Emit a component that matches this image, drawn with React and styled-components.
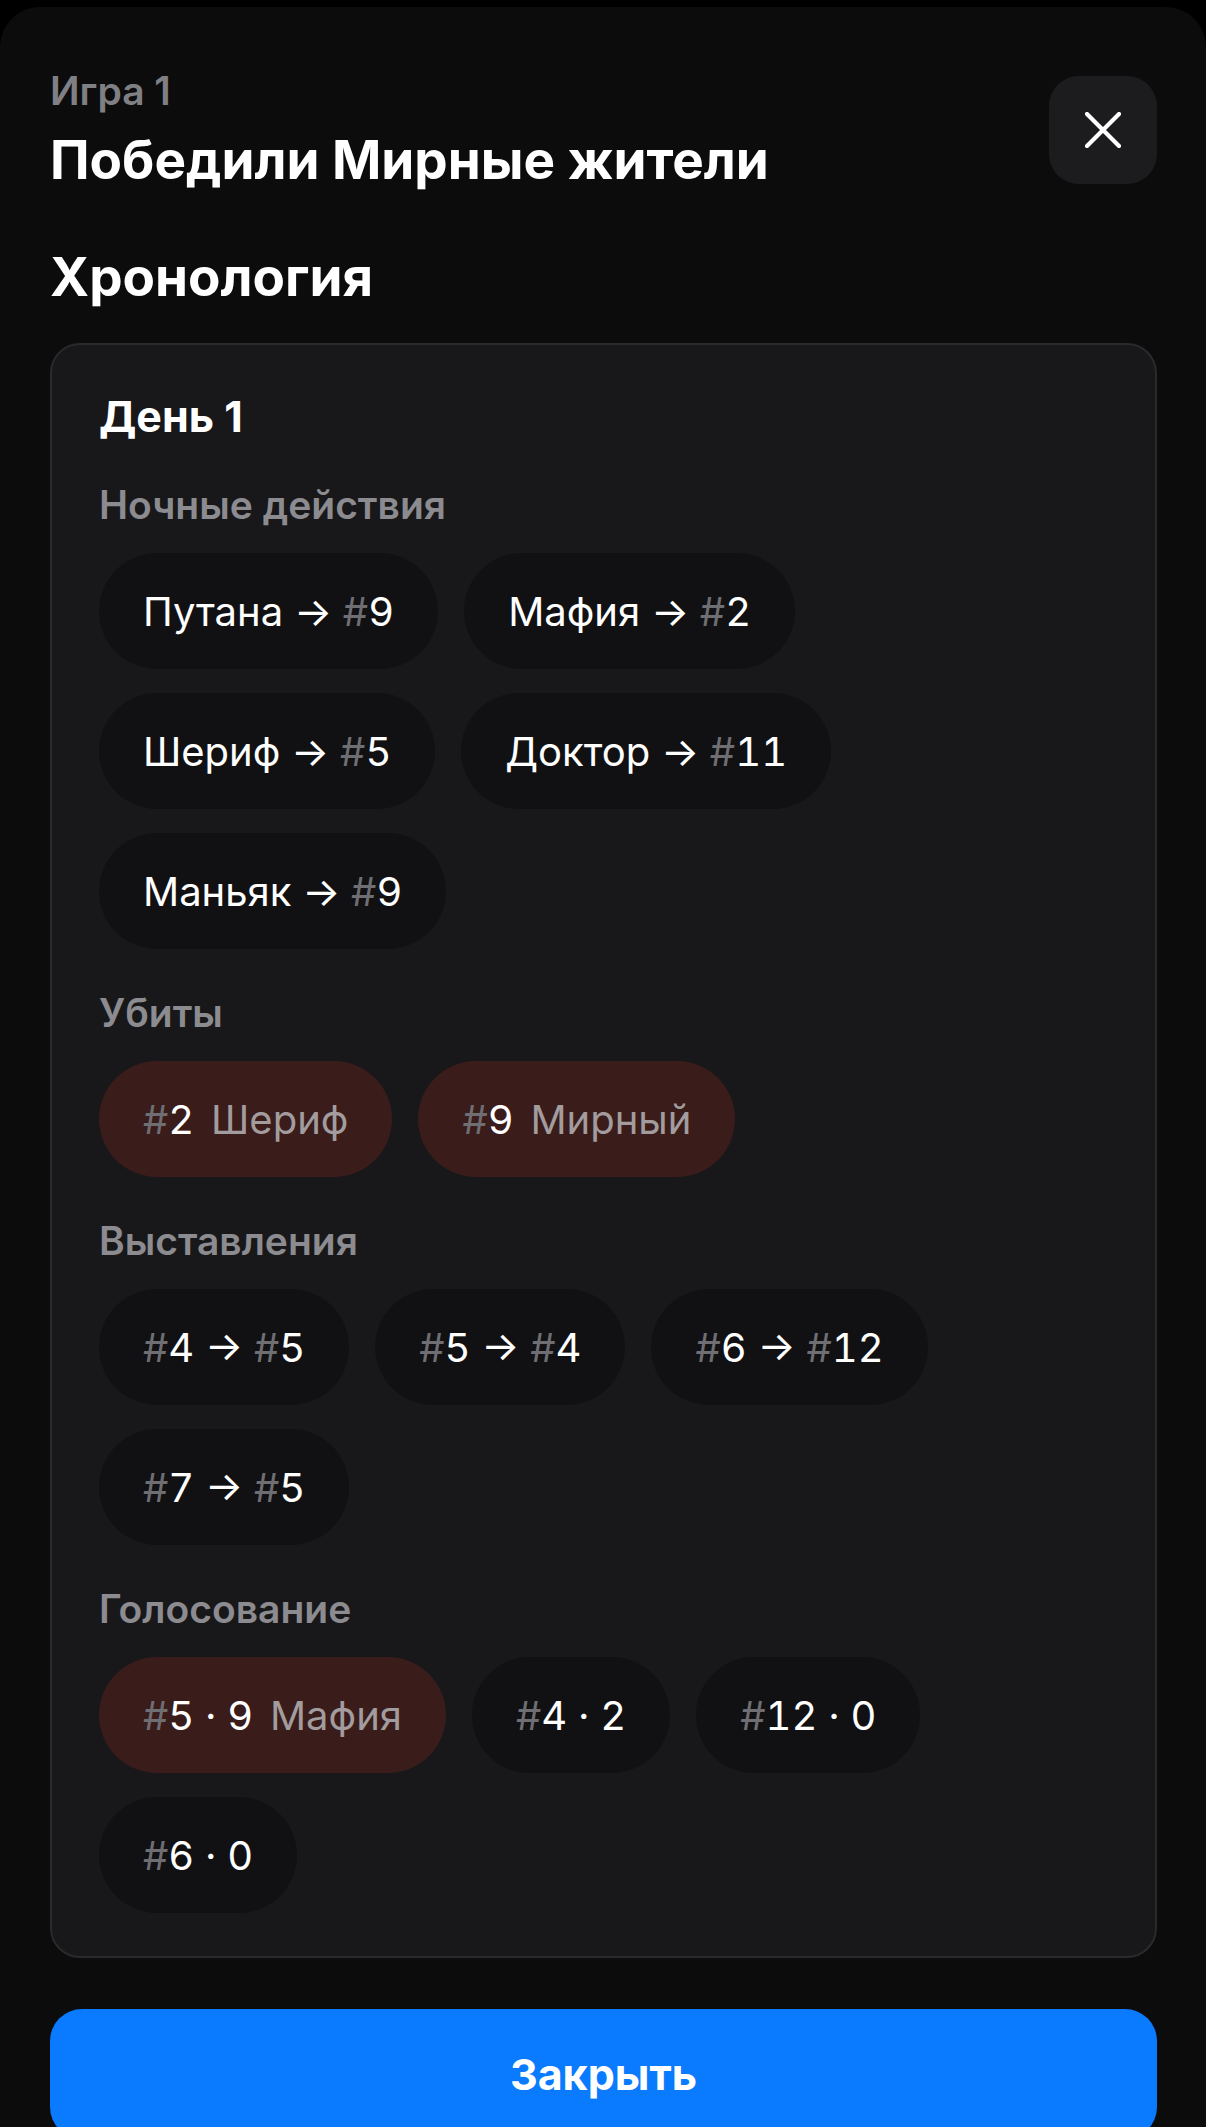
import React from 'react';
import styled, { createGlobalStyle } from 'styled-components';

const GlobalStyle = createGlobalStyle`
  html, body {
    margin: 0;
    padding: 0;
    background: #000;
    overflow: hidden;
  }
  body {
    font-family: Inter, "Noto Sans", sans-serif;
    -webkit-font-smoothing: antialiased;
  }
  * { box-sizing: border-box; }
`;

const Screen = styled.div`
  min-height: 2127px;
  background: #000;
  padding-top: 7px;
`;

const Sheet = styled.div`
  min-height: 2120px;
  background: #0c0c0d;
  border-radius: 40px 40px 0 0;
  padding: 62px 49px 0 50px;
  display: flex;
  flex-direction: column;
`;

const Header = styled.header`
  display: flex;
  justify-content: space-between;
  align-items: flex-start;
`;

const TitleBlock = styled.div`
  display: flex;
  flex-direction: column;
  gap: 18px;
`;

const Eyebrow = styled.div`
  font-size: 39px;
  line-height: 44px;
  font-weight: 600;
  color: #7f7f84;
`;

const Title = styled.h1`
  margin: 0;
  font-size: 53px;
  line-height: 58px;
  font-weight: 700;
  color: #fff;
`;

const CloseButton = styled.button`
  margin-top: 7px;
  width: 108px;
  height: 108px;
  border: none;
  padding: 0;
  border-radius: 30px;
  background: #1c1c1e;
  display: flex;
  align-items: center;
  justify-content: center;
  cursor: pointer;
`;

const SectionTitle = styled.h2`
  margin: 58px 0 0;
  font-size: 53px;
  line-height: 60px;
  font-weight: 700;
  color: #fff;
`;

const Card = styled.section`
  margin-top: 36px;
  background: #18181a;
  border: 2px solid #2a2a2d;
  border-radius: 30px;
  padding: 46px 47px 43px;
  display: flex;
  flex-direction: column;
  gap: 41px;
`;

const DayTitle = styled.h3`
  margin: 0;
  font-size: 43px;
  line-height: 50px;
  font-weight: 700;
  color: #fff;
`;

const Group = styled.div`
  display: flex;
  flex-direction: column;
  gap: 25px;
`;

const GroupLabel = styled.div`
  font-size: 39px;
  line-height: 46px;
  font-weight: 600;
  color: #8b8b90;
`;

const ChipRow = styled.div`
  display: flex;
  flex-wrap: wrap;
  gap: 24px 26px;
`;

const Chip = styled.div`
  height: 116px;
  padding: 0 44px;
  border-radius: 58px;
  background: ${(p) => (p.$danger ? '#3a1c1b' : '#111113')};
  display: flex;
  align-items: center;
  font-size: 40px;
  font-weight: 400;
  font-variant-numeric: tabular-nums;
  color: #fff;
`;

const ChipText = styled.span`
  white-space: nowrap;
`;

const Hash = styled.span`
  color: #6e6e73;
`;

const Muted = styled.span`
  margin-left: 6px;
  color: #a29c9e;
`;

const PrimaryButton = styled.button`
  margin-top: 51px;
  width: 100%;
  height: 130px;
  border: none;
  border-radius: 32px;
  background: #0a7aff;
  color: #fff;
  font-family: inherit;
  font-size: 43px;
  font-weight: 700;
  cursor: pointer;
`;

const CloseIcon = () => (
  <svg width="36" height="36" viewBox="0 0 36 36" fill="none">
    <path
      d="M2 2L34 34M34 2L2 34"
      stroke="#fff"
      strokeWidth="4.2"
      strokeLinecap="round"
    />
  </svg>
);

const Num = ({ n }) => (
  <>
    <Hash>#</Hash>
    {n}
  </>
);

const night = [
  ['Путана', 9],
  ['Мафия', 2],
  ['Шериф', 5],
  ['Доктор', 11],
  ['Маньяк', 9],
];

const killed = [
  [2, 'Шериф'],
  [9, 'Мирный'],
];

const nominations = [
  [4, 5],
  [5, 4],
  [6, 12],
  [7, 5],
];

const votes = [
  [5, 9, 'Мафия'],
  [4, 2],
  [12, 0],
  [6, 0],
];

export default function App() {
  return (
    <>
      <GlobalStyle />
      <Screen>
        <Sheet>
          <Header>
            <TitleBlock>
              <Eyebrow>Игра 1</Eyebrow>
              <Title>Победили Мирные жители</Title>
            </TitleBlock>
            <CloseButton aria-label="Закрыть">
              <CloseIcon />
            </CloseButton>
          </Header>

          <SectionTitle>Хронология</SectionTitle>

          <Card>
            <DayTitle>День 1</DayTitle>

            <Group>
              <GroupLabel>Ночные действия</GroupLabel>
              <ChipRow>
                {night.map(([role, n]) => (
                  <Chip key={role}>
                    <ChipText>
                      {role} → <Num n={n} />
                    </ChipText>
                  </Chip>
                ))}
              </ChipRow>
            </Group>

            <Group>
              <GroupLabel>Убиты</GroupLabel>
              <ChipRow>
                {killed.map(([n, role]) => (
                  <Chip key={n} $danger>
                    <ChipText>
                      <Num n={n} /> <Muted>{role}</Muted>
                    </ChipText>
                  </Chip>
                ))}
              </ChipRow>
            </Group>

            <Group>
              <GroupLabel>Выставления</GroupLabel>
              <ChipRow>
                {nominations.map(([a, b]) => (
                  <Chip key={`${a}-${b}`}>
                    <ChipText>
                      <Num n={a} /> → <Num n={b} />
                    </ChipText>
                  </Chip>
                ))}
              </ChipRow>
            </Group>

            <Group>
              <GroupLabel>Голосование</GroupLabel>
              <ChipRow>
                {votes.map(([n, count, role]) => (
                  <Chip key={n} $danger={!!role}>
                    <ChipText>
                      <Num n={n} /> · {count}
                      {role && (
                        <>
                          {' '}
                          <Muted>{role}</Muted>
                        </>
                      )}
                    </ChipText>
                  </Chip>
                ))}
              </ChipRow>
            </Group>
          </Card>

          <PrimaryButton>Закрыть</PrimaryButton>
        </Sheet>
      </Screen>
    </>
  );
}
